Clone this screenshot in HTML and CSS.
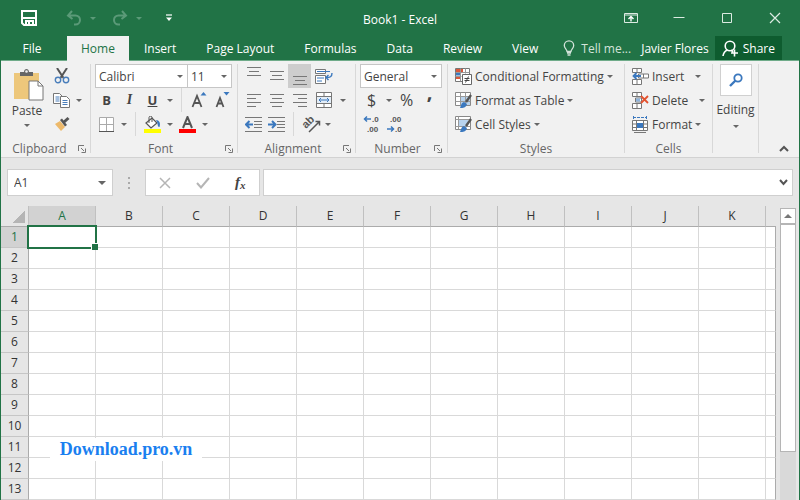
FILE: index.html
```html
<!DOCTYPE html>
<html lang="en">
<head>
  <meta charset="UTF-8">
  <meta name="viewport" content="width=device-width, initial-scale=1.0">
  <title>Book1 - Excel</title>
  <link rel="stylesheet" href="styles.css">
</head>
<body>
  <div class="app">
    <!-- Title bar -->
    <header class="titlebar">
      <div class="quick">
        <button class="save" aria-label="Save">
          <svg width="16" height="16" viewBox="0 0 16 16"><path d="M1 1h14v14H3l-2-2z" fill="none" stroke="#fff" stroke-width="2"/><path d="M2 8h12M5 15v-4h7v4" fill="none" stroke="#fff" stroke-width="2"/><path d="M7 12h2v3H7z" fill="#fff"/></svg>
        </button>
        <button class="faded" aria-label="Undo">
          <svg width="16" height="16" viewBox="0 0 16 16"><path d="M6 1L2 5.500 6.500 9M2 5.500h7.500a4.500 4.500 0 0 1 0 9H8" fill="none" stroke="currentColor" stroke-width="2"/></svg>
        </button>
        <button class="faded arrow" aria-label="Undo list"><span class="caret"></span></button>
        <button class="faded redo" aria-label="Redo">
          <svg width="16" height="16" viewBox="0 0 16 16"><path d="M10 1l4 4.500L9.500 9M14 5.500H6.500a4.500 4.500 0 0 0 0 9H8" fill="none" stroke="currentColor" stroke-width="2"/></svg>
        </button>
        <button class="faded arrow" aria-label="Redo list"><span class="caret"></span></button>
        <button class="customize" aria-label="Customize Quick Access Toolbar">
          <svg width="8" height="8" viewBox="0 0 8 8"><path d="M1 1h6" stroke="#fff" stroke-width="1.200"/><path d="M1 3.500h6L4 7z" fill="#fff"/></svg>
        </button>
      </div>
      <h1>Book1 - Excel</h1>
      <div class="window-buttons">
        <button aria-label="Ribbon display options">
          <svg width="16" height="12" viewBox="0 0 16 12"><path d="M1.500 1.500h13v9h-13zM1 3h14" fill="none" stroke="#dcebe2"/><path d="M8 9.500V5M5.500 7L8 4.500 10.500 7" fill="none" stroke="#fff" stroke-width="1.400"/></svg>
        </button>
        <button aria-label="Minimize">
          <svg width="12" height="12" viewBox="0 0 12 12"><path d="M0.500 5.500h11" stroke="#dcebe2"/></svg>
        </button>
        <button aria-label="Maximize">
          <svg width="12" height="12" viewBox="0 0 12 12"><path d="M1.500 1.500h9v9h-9z" fill="none" stroke="#dcebe2"/></svg>
        </button>
        <button aria-label="Close">
          <svg width="12" height="12" viewBox="0 0 12 12"><path d="M1 1l10 10M11 1L1 11" stroke="#dcebe2" stroke-width="1.200"/></svg>
        </button>
      </div>
    </header>

    <!-- Ribbon tabs -->
    <nav class="tabs">
      <button class="file">File</button>
      <button class="active">Home</button>
      <button>Insert</button>
      <button>Page Layout</button>
      <button>Formulas</button>
      <button>Data</button>
      <button>Review</button>
      <button>View</button>
      <button class="tell">
        <svg width="12" height="16" viewBox="0 0 12 16"><path d="M4 11.500C4 9 1.300 8.500 1.300 5.500a4.700 4.700 0 0 1 9.400 0C10.700 8.500 8 9 8 11.500zM4 13h4M4.500 15h3" fill="none" stroke="currentColor" stroke-width="1.300"/></svg>
        Tell me...
      </button>
      <button class="user">Javier Flores</button>
      <button class="share">
        <svg width="17" height="17" viewBox="0 0 17 17"><circle cx="8" cy="6" r="4.800" fill="none" stroke="#fff" stroke-width="1.600"/><path d="M1 16c.5-3.500 2-5 4.500-6M9 10l2 2M12.500 9.500v7M9 13h7" fill="none" stroke="#fff" stroke-width="1.600"/></svg>
        Share
      </button>
    </nav>

    <!-- Ribbon -->
    <div class="ribbon">
      <section class="group clipboard">
        <div class="tools split">
          <button class="big" aria-label="Paste">
            <svg width="32" height="34" viewBox="0 0 32 34"><path d="M1 5h25v26H1z" fill="#edc77b"/><path d="M7 4h4c0-4 5-4 5 0h4v4H7z" fill="#666"/><circle cx="13.500" cy="3.500" r="1.300" fill="#f1f1f1"/><path d="M16 13h9l5 5v14H16z" fill="#fff" stroke="#777"/><path d="M25 13v5h5" fill="none" stroke="#777"/></svg>
            <span>Paste</span>
            <span class="caret"></span>
          </button>
          <div class="side">
            <div class="row">
              <button class="tool" aria-label="Cut">
                <svg width="16" height="16" viewBox="0 0 16 16"><path d="M3 0l6.500 10M13 0L6.500 10" stroke="#555" stroke-width="2"/><circle cx="4" cy="12" r="2.700" fill="none" stroke="#4a7ebb" stroke-width="1.400"/><circle cx="12" cy="12" r="2.700" fill="none" stroke="#4a7ebb" stroke-width="1.400"/></svg>
              </button>
            </div>
            <div class="row">
              <button class="tool" aria-label="Copy">
                <svg width="17" height="16" viewBox="0 0 17 16"><path d="M.5 1.500h6l3 3v7h-9z" fill="#fff" stroke="#777"/><path d="M2.500 5h4M2.500 7h4M2.500 9h4" stroke="#4a7ebb"/><path d="M7.500 4.500h6l3 3v8h-9z" fill="#fff" stroke="#777"/><path d="M9.500 8.500h5M9.500 10.500h5M9.500 12.500h5" stroke="#4a7ebb"/></svg>
              </button>
              <button class="drop" aria-label="Copy options"><span class="caret"></span></button>
            </div>
            <div class="row">
              <button class="tool" aria-label="Format Painter">
                <svg width="16" height="16" viewBox="0 0 16 16"><path d="M1 8l5-3 5 6-4 4z" fill="#edb96a"/><path d="M6 4l2-1.500 5 6.500-2 1.500z" fill="#555"/><path d="M10 6l4.500-4" stroke="#555" stroke-width="3"/></svg>
              </button>
            </div>
          </div>
        </div>
        <footer><h2>Clipboard</h2><button class="launcher" aria-label="Clipboard settings"><svg width="8" height="8" viewBox="0 0 8 8"><path d="M.5 6V.5H6M3 3l3 3M7.500 3.500v4h-4" fill="none" stroke="#777"/></svg></button></footer>
      </section>

      <section class="group font">
        <div class="tools">
          <div class="row">
            <select class="font-name" aria-label="Font"><option>Calibri</option></select>
            <select class="font-size" aria-label="Font size"><option>11</option></select>
          </div>
          <div class="row">
            <button class="tool bold">B</button>
            <button class="tool italic">I</button>
            <button class="tool underline">U</button>
            <button class="drop" aria-label="Underline options"><span class="caret"></span></button>
            <span class="line"></span>
            <button class="tool" aria-label="Increase font size">
              <svg width="16" height="18" viewBox="0 0 16 18"><path d="M1.500 16L6 5l4.500 11M3 12h6" fill="none" stroke="#555" stroke-width="1.800"/><path d="M9.500 4.500l3-3.500 3 3.500z" fill="#3b78be"/></svg>
            </button>
            <button class="tool" aria-label="Decrease font size">
              <svg width="16" height="18" viewBox="0 0 16 18"><path d="M2.500 16L6 7l3.500 9M3.500 12.500h5" fill="none" stroke="#555" stroke-width="1.800"/><path d="M9.500 1l3 3.500 3-3.500z" fill="#3b78be"/></svg>
            </button>
          </div>
          <div class="row">
            <button class="tool" aria-label="Borders">
              <svg width="15" height="15" viewBox="0 0 15 15"><path d="M.5.5h14v14H.5zM7.500 1v13M1 7.500h13" fill="#fff" stroke="#aaa"/><path d="M0 14.500h15" stroke="#555"/></svg>
            </button>
            <button class="drop" aria-label="Border options"><span class="caret"></span></button>
            <span class="line"></span>
            <button class="tool" aria-label="Fill color">
              <svg width="17" height="17" viewBox="0 0 17 17"><path d="M2 7l6-5 5 5-6 5z" fill="#fff" stroke="#555" stroke-width="1.200"/><path d="M5 7V1.500C5-.3 8-.3 8 1.500V6" fill="none" stroke="#555"/><path d="M12 4c3 0 5 3 3.500 7-1 .5-2-1-2-4z" fill="#3b78be"/><path d="M0 13h17v4H0z" fill="#ff0"/></svg>
            </button>
            <button class="drop" aria-label="Fill color options"><span class="caret"></span></button>
            <button class="tool" aria-label="Font color">
              <svg width="17" height="17" viewBox="0 0 17 17"><path d="M4 12l4.500-11L13 12M5.500 8h6" fill="none" stroke="#555" stroke-width="2"/><path d="M0 13h17v4H0z" fill="#f00"/></svg>
            </button>
            <button class="drop" aria-label="Font color options"><span class="caret"></span></button>
          </div>
        </div>
        <footer><h2>Font</h2><button class="launcher" aria-label="Font settings"><svg width="8" height="8" viewBox="0 0 8 8"><path d="M.5 6V.5H6M3 3l3 3M7.500 3.500v4h-4" fill="none" stroke="#777"/></svg></button></footer>
      </section>

      <section class="group alignment">
        <div class="tools">
          <div class="row">
            <button class="tool" aria-label="Top align"><svg width="16" height="20" viewBox="0 0 16 20"><path d="M1 1.500h14M3 5.500h10M1 9.500h14" stroke="#777"/></svg></button>
            <button class="tool" aria-label="Middle align"><svg width="16" height="20" viewBox="0 0 16 20"><path d="M1 5.500h14M3 9.500h10M1 13.500h14" stroke="#777"/></svg></button>
            <button class="tool pressed" aria-label="Bottom align"><svg width="16" height="20" viewBox="0 0 16 20"><path d="M1 10.500h14M3 14.500h10M1 18.500h14" stroke="#777"/></svg></button>
            <button class="tool wide" aria-label="Wrap text">
              <svg width="18" height="17" viewBox="0 0 18 17"><path d="M.5 1.500h10v4H.5zM.5 7.500h10v8H.5z" fill="#fff" stroke="#777"/><path d="M2 3.500h13M2 10h7M2 13h5" stroke="#3b78be"/><path d="M17 5c0 4-2 4.500-6 4.500M13.500 7L11 9.500l2.500 2.500" fill="none" stroke="#3b78be" stroke-width="1.400"/></svg>
            </button>
          </div>
          <div class="row">
            <button class="tool" aria-label="Align left"><svg width="16" height="14" viewBox="0 0 16 14"><path d="M1 1.500h14M1 5.500h9M1 9.500h14M1 13.500h9" stroke="#777"/></svg></button>
            <button class="tool" aria-label="Center"><svg width="16" height="14" viewBox="0 0 16 14"><path d="M1 1.500h14M3 5.500h10M1 9.500h14M3 13.500h10" stroke="#777"/></svg></button>
            <button class="tool" aria-label="Align right"><svg width="16" height="14" viewBox="0 0 16 14"><path d="M1 1.500h14M6 5.500h9M1 9.500h14M6 13.500h9" stroke="#777"/></svg></button>
            <button class="tool wide" aria-label="Merge and center">
              <svg width="16" height="16" viewBox="0 0 16 16"><path d="M.5.5h15v15H.5zM.5 4.500h15M.5 11.500h15M8 0v4M8 12v4" fill="#fff" stroke="#777"/><path d="M1 5h14v6H1z" fill="#e4eef8"/><path d="M3 8h10M5 6L3 8l2 2M11 6l2 2-2 2" fill="none" stroke="#3b78be"/></svg>
            </button>
            <button class="drop" aria-label="Merge options"><span class="caret"></span></button>
          </div>
          <div class="row">
            <button class="tool" aria-label="Decrease indent"><svg width="17" height="15" viewBox="0 0 17 15"><path d="M0 .5h17M9 4.500h8M9 7.500h8M9 10.500h8M0 14.500h17" stroke="#777"/><path d="M1 7.500h7M4.500 4L1 7.500 4.500 11" fill="none" stroke="#3b78be" stroke-width="2"/></svg></button>
            <button class="tool" aria-label="Increase indent"><svg width="17" height="15" viewBox="0 0 17 15"><path d="M0 .5h17M9 4.500h8M9 7.500h8M9 10.500h8M0 14.500h17" stroke="#777"/><path d="M0 7.500h7M4 4l3.500 3.500L4 11" fill="none" stroke="#3b78be" stroke-width="2"/></svg></button>
            <span class="line"></span>
            <button class="tool" aria-label="Orientation">
              <svg width="20" height="20" viewBox="0 0 20 20"><text class="ab" x="5" y="15" transform="rotate(-45 5 15)">ab</text><path d="M8 18L18 8M14.500 7.500h4v4" fill="none" stroke="#555" stroke-width="1.500"/></svg>
            </button>
            <button class="drop" aria-label="Orientation options"><span class="caret"></span></button>
          </div>
        </div>
        <footer><h2>Alignment</h2><button class="launcher" aria-label="Alignment settings"><svg width="8" height="8" viewBox="0 0 8 8"><path d="M.5 6V.5H6M3 3l3 3M7.500 3.500v4h-4" fill="none" stroke="#777"/></svg></button></footer>
      </section>

      <section class="group number">
        <div class="tools">
          <div class="row">
            <select class="format" aria-label="Number format"><option>General</option></select>
          </div>
          <div class="row">
            <button class="tool sign">$</button>
            <button class="drop" aria-label="Currency options"><span class="caret"></span></button>
            <button class="tool sign">%</button>
            <button class="tool comma">,</button>
          </div>
          <div class="row">
            <button class="tool" aria-label="Increase decimal">
              <svg width="18" height="22" viewBox="0 0 18 22"><text class="digits" x="9" y="9">.0</text><text class="digits" x="4" y="19">.00</text><path d="M1 6h7M4 3.500L1.500 6 4 8.500" fill="none" stroke="#3b78be" stroke-width="1.500"/></svg>
            </button>
            <button class="tool" aria-label="Decrease decimal">
              <svg width="18" height="22" viewBox="0 0 18 22"><text class="digits" x="4" y="9">.00</text><text class="digits" x="9" y="19">.0</text><path d="M1 16h7M5 13.500L7.500 16 5 18.500" fill="none" stroke="#3b78be" stroke-width="1.500"/></svg>
            </button>
          </div>
        </div>
        <footer><h2>Number</h2><button class="launcher" aria-label="Number settings"><svg width="8" height="8" viewBox="0 0 8 8"><path d="M.5 6V.5H6M3 3l3 3M7.500 3.500v4h-4" fill="none" stroke="#777"/></svg></button></footer>
      </section>

      <section class="group styles">
        <div class="tools">
          <button class="row label-tool">
            <svg width="17" height="17" viewBox="0 0 17 17"><path d="M.5.5h14v13H.5z" fill="#fff" stroke="#777"/><path d="M1 1h7v3H1zM1 8h4v3H1z" fill="#d9573b"/><path d="M1 4.500h5v3H1z" fill="#3b78be"/><path d="M.5 4.500h14M.5 8.500h6M5.500.5v13M10.500.5v5" stroke="#999" fill="none"/><path d="M7.500 6.500h9v10h-9z" fill="#fff" stroke="#666"/><path d="M9.500 10.500h5M9.500 12.500h5M13.500 8.500l-3 6" stroke="#444"/></svg>
            <span>Conditional Formatting</span><span class="caret"></span>
          </button>
          <button class="row label-tool">
            <svg width="17" height="17" viewBox="0 0 17 17"><path d="M.5.5h15v13H.5z" fill="#fff" stroke="#888"/><path d="M5 5h10v8H5z" fill="#b8d3ee"/><path d="M.5 4.500h15M.5 9.500h15M5.500.5v13M10.500.5v13" stroke="#999" fill="none"/><path d="M16 3l-5 7" stroke="#555" stroke-width="2.400"/><path d="M5 16c1-2 1-5 4-6l3 2c-1 4-4 4-7 4z" fill="#3b78be"/></svg>
            <span>Format as Table</span><span class="caret"></span>
          </button>
          <button class="row label-tool">
            <svg width="17" height="17" viewBox="0 0 17 17"><path d="M.5.5h15v13H.5z" fill="#fff" stroke="#888"/><path d="M4 4h9v7H4z" fill="#b8d3ee"/><path d="M.5 3.500h15M.5 10.500h15M3.500.5v13" stroke="#999" fill="none"/><path d="M16 3l-5 7" stroke="#555" stroke-width="2.400"/><path d="M5 16c1-2 1-5 4-6l3 2c-1 4-4 4-7 4z" fill="#3b78be"/></svg>
            <span>Cell Styles</span><span class="caret"></span>
          </button>
        </div>
        <footer><h2>Styles</h2></footer>
      </section>

      <section class="group cells">
        <div class="tools">
          <button class="row label-tool">
            <svg width="17" height="17" viewBox="0 0 17 17"><path d="M.5.5h9v4h-9zM5 .5v4M.5 11.500h9v5h-9zM5 11.500v5M6.500 6h10v4h-10zM11.500 6v4" fill="#fff" stroke="#777"/><path d="M1 8h8M4.500 5L1.500 8l3 3" fill="none" stroke="#3b78be" stroke-width="1.800"/></svg>
            <span>Insert</span><span class="caret far"></span>
          </button>
          <button class="row label-tool">
            <svg width="17" height="17" viewBox="0 0 17 17"><path d="M.5.5h9v4h-9zM5 .5v4M.5 11.500h9v5h-9zM5 11.500v5M3.500 6h6v4h-6z" fill="#fff" stroke="#777"/><path d="M4 6.500h4v3H4z" fill="#8fb4dc"/><path d="M9 4l7 7M16 4l-7 7" stroke="#e2522f" stroke-width="1.800"/></svg>
            <span>Delete</span><span class="caret far"></span>
          </button>
          <button class="row label-tool">
            <svg width="17" height="17" viewBox="0 0 17 17"><path d="M1 1.500h14M1.500 0v3M14.500 0v3" stroke="#3b78be" stroke-dasharray="3 1"/><path d="M.5 4.500h15v10H.5zM.5 8h15M.5 11.500h15M4.500 4.500v10M11.500 4.500v10" fill="#fff" stroke="#777"/><path d="M5 7h6v5H5z" fill="#3b78be"/><path d="M2 16.500h12" stroke="#777"/></svg>
            <span>Format</span><span class="caret"></span>
          </button>
        </div>
        <footer><h2>Cells</h2></footer>
      </section>

      <section class="group editing">
        <button class="edit">
          <span class="edit-icon"><svg width="14" height="14" viewBox="0 0 14 14"><circle cx="9" cy="5" r="3.700" fill="none" stroke="#3b78be" stroke-width="1.800"/><path d="M6.500 7.500L1 13" stroke="#3b78be" stroke-width="2.400"/></svg></span>
          <span>Editing</span>
          <span class="caret"></span>
        </button>
      </section>

      <button class="collapse" aria-label="Collapse the ribbon">
        <svg width="10" height="7" viewBox="0 0 10 7"><path d="M1 6l4-4 4 4" fill="none" stroke="#555" stroke-width="2"/></svg>
      </button>
    </div>

    <!-- Formula bar -->
    <div class="formula-bar">
      <div class="name-box">
        <input type="text" value="A1" aria-label="Name box">
        <button aria-label="Named ranges"><span class="caret large"></span></button>
      </div>
      <span class="dots"></span>
      <div class="formula-buttons">
        <button aria-label="Cancel"><svg width="12" height="12" viewBox="0 0 12 12"><path d="M1 1l10 10M11 1L1 11" stroke="#b5b5b5" stroke-width="1.500"/></svg></button>
        <button aria-label="Enter"><svg width="14" height="12" viewBox="0 0 14 12"><path d="M1 6l4 4.500L13 1" fill="none" stroke="#b5b5b5" stroke-width="2"/></svg></button>
        <button class="fx" aria-label="Insert function">f<small>x</small></button>
      </div>
      <div class="formula">
        <input type="text" aria-label="Formula">
        <button aria-label="Expand formula bar"><svg width="9" height="7" viewBox="0 0 9 7"><path d="M1 1l3.500 4L8 1" fill="none" stroke="#555" stroke-width="2"/></svg></button>
      </div>
    </div>

    <!-- Sheet -->
    <main class="sheet">
      <div class="grid">
        <table>
          <thead>
            <tr id="columns"><th class="corner"></th></tr>
          </thead>
          <tbody id="rows"></tbody>
        </table>
      </div>
      <div class="scrollbar">
        <button aria-label="Scroll up"><span class="up"></span></button>
        <div class="thumb"></div>
      </div>
      <a class="watermark" href="#">Download.pro.vn</a>
    </main>
  </div>
  <script>
    const letters = "ABCDEFGHIJK";
    const rowCount = 13;

    const columns = document.getElementById("columns");
    for (const letter of letters) {
      const th = document.createElement("th");
      th.textContent = letter;
      if (letter === "A") th.className = "current";
      columns.appendChild(th);
    }
    // the last column runs under the edge of the window
    const rest = document.createElement("th");
    rest.className = "rest";
    columns.appendChild(rest);

    const rows = document.getElementById("rows");
    for (let i = 1; i <= rowCount; i++) {
      const tr = document.createElement("tr");
      const th = document.createElement("th");
      th.textContent = i;
      if (i === 1) th.className = "current";
      tr.appendChild(th);
      for (let j = 0; j <= letters.length; j++) {
        const td = document.createElement("td");
        if (i === 1 && j === 0) td.className = "selected";
        tr.appendChild(td);
      }
      rows.appendChild(tr);
    }
  </script>
</body>
</html>
```
FILE: styles.css
```css
* {
  box-sizing: border-box;
}
body {
  margin: 0;
  font-family: "Open Sans", "Noto Sans", sans-serif;
  font-size: 12px;
  color: #444;
}
button, input, select {
  font: inherit;
  color: inherit;
  margin: 0;
  padding: 0;
  border: none;
  background: none;
  border-radius: 0;
}
button {
  display: flex;
  align-items: center;
  justify-content: center;
  white-space: nowrap;
}
svg {
  display: block;
  flex: none;
}
h1, h2 {
  margin: 0;
  font-size: 12px;
  font-weight: normal;
}
.app {
  display: flex;
  flex-direction: column;
  height: 100vh;
  overflow: hidden;
  border-left: 1px solid #217346;
  border-right: 1px solid #217346;
  background: #e6e6e6;
}
.caret {
  flex: none;
  border: 3px solid transparent;
  border-top-color: #666;
  border-bottom: none;
}
.caret.large {
  border-width: 4px 4px 0;
}

/* Title bar */
.titlebar {
  display: grid;
  grid-template-columns: 1fr auto 1fr;
  align-items: center;
  height: 36px;
  flex: none;
  background: #217346;
  color: #fff;
}
.titlebar h1 {
  padding-top: 3px;
}
.quick {
  display: flex;
  align-items: center;
  padding-left: 20px;
}
.save {
  margin-right: 29px;
}
.faded {
  color: #5b9a78;
}
.faded .caret {
  border-top-color: #5b9a78;
}
.arrow {
  width: 22px;
}
.redo {
  margin-left: 8px;
}
.customize {
  margin-left: 15px;
}
.window-buttons {
  display: flex;
  justify-content: flex-end;
}
.window-buttons button {
  width: 48px;
  height: 34px;
}

/* Tabs */
.tabs {
  display: flex;
  height: 25px;
  flex: none;
  background: #217346;
  border-bottom: 1px solid #6fab89;
  color: #fff;
}
.tabs button {
  flex: none;
  padding: 0 15px;
}
.tabs .file {
  width: 66px;
  padding: 0 4px 0 0;
}
.tabs .active {
  height: 25px;
  padding: 0 14px;
  background: #f1f1f1;
  color: #217346;
}
.tabs .tell {
  gap: 6px;
  padding: 0 4px 0 10px;
  color: #d3e3da;
}
.tabs .user {
  padding: 0 6px;
}
.tabs .share {
  gap: 4px;
  margin: 0 17px 0 auto;
  padding: 0 7px;
  background: #0e5c2f;
}

/* Ribbon */
.ribbon {
  display: flex;
  height: 97px;
  flex: none;
  padding-top: 3px;
  background: #f1f1f1;
  border-bottom: 1px solid #d2d2d2;
}
.group {
  display: flex;
  flex-direction: column;
  flex: none;
  margin-bottom: 4px;
  border-right: 1px solid #d8d8d8;
}
.tools {
  height: 72px;
  padding-left: 4px;
}
.row {
  display: flex;
  align-items: center;
  height: 24px;
}
.group footer {
  display: flex;
  align-items: center;
  justify-content: center;
  height: 17px;
  margin-top: 4px;
  padding: 0 5px;
  color: #666;
}
.group footer h2 {
  flex: 1;
  text-align: center;
}
.launcher {
  width: 8px;
}
.clipboard { width: 90px; }
.font { width: 147px; }
.alignment { width: 118px; }
.number { width: 92px; }
.styles { width: 177px; }
.cells { width: 88px; }
.editing { width: 46px; }
.clipboard footer, .font footer, .alignment footer {
  padding-right: 4px;
}
.clipboard footer {
  padding-left: 0;
}
.group.clipboard .tools {
  display: flex;
  padding-left: 3px;
}
.big {
  flex-direction: column;
  justify-content: flex-start;
  width: 46px;
  padding-top: 4px;
}
.big svg {
  margin-left: 4px;
}
.big .caret {
  margin-top: 5px;
}
.tool {
  width: 23px;
  height: 24px;
}
.tool.wide {
  width: 26px;
}
.pressed {
  background: #cdcdcd;
}
.drop {
  width: 12px;
  height: 24px;
}
.line {
  width: 1px;
  height: 24px;
  margin: 0 5px;
  background: #d8d8d8;
}
.bold, .underline {
  font-weight: bold;
  font-size: 13px;
}
.underline {
  text-decoration: underline;
}
.italic {
  font-family: "Liberation Serif", serif;
  font-style: italic;
  font-weight: bold;
  font-size: 14px;
}
.sign {
  font-size: 16px;
}
.comma {
  font-size: 20px;
  font-weight: bold;
  line-height: 10px;
  padding-bottom: 16px;
}
.ab {
  font-family: "Liberation Sans", sans-serif;
  font-size: 11px;
  font-weight: bold;
  fill: #555;
}
.digits {
  font-family: "Liberation Sans", sans-serif;
  font-size: 8px;
  font-weight: bold;
  fill: #555;
}
select {
  appearance: none;
  height: 24px;
  padding-left: 3px;
  border: 1px solid #c6c6c6;
  background: #fff url("data:image/svg+xml,%3Csvg xmlns='http://www.w3.org/2000/svg' width='6' height='3'%3E%3Cpath d='M0 0h6L3 3z' fill='%23666'/%3E%3C/svg%3E") no-repeat right 4px center;
}
.font-name {
  width: 93px;
}
.font-size {
  width: 45px;
  margin-left: -1px;
}
.format {
  width: 82px;
}
.styles .tools, .cells .tools {
  padding-left: 7px;
}
.label-tool {
  gap: 3px;
}
.far {
  margin-left: 8px;
}
.edit {
  flex-direction: column;
}
.edit-icon {
  display: flex;
  align-items: center;
  justify-content: center;
  width: 32px;
  height: 32px;
  margin-bottom: 5px;
  border: 1px solid #d0d0d0;
  background: #fff;
}
.edit .caret {
  margin-top: 7px;
}
.collapse {
  align-self: flex-end;
  margin: 0 10px 5px auto;
}

/* Formula bar */
.formula-bar {
  display: flex;
  height: 48px;
  flex: none;
  padding: 11px 6px 10px;
}
.name-box, .formula-buttons, .formula {
  display: flex;
  align-items: center;
  border: 1px solid #cfcfcf;
  background: #fff;
}
.name-box {
  width: 106px;
}
.name-box input {
  flex: 1;
  min-width: 0;
  padding-left: 6px;
}
.name-box button {
  width: 20px;
  height: 24px;
}
.dots {
  width: 2px;
  height: 12px;
  margin: 8px 15px 0;
  background: repeating-linear-gradient(#aaa 0 2px, transparent 2px 5px);
}
.formula-buttons {
  width: 115px;
  margin-right: 3px;
}
.formula-buttons button {
  width: 38px;
  height: 24px;
}
.formula-buttons .fx {
  font-family: "Liberation Serif", serif;
  font-style: italic;
  font-weight: bold;
  font-size: 15px;
}
.fx small {
  font-size: 11px;
  padding-top: 4px;
}
.formula {
  flex: 1;
}
.formula input {
  flex: 1;
  min-width: 0;
  padding-left: 6px;
}
.formula button {
  width: 18px;
  height: 24px;
}

/* Sheet */
.sheet {
  position: relative;
  display: flex;
  flex: 1;
  min-height: 0;
}
.grid {
  flex: 1;
  min-width: 0;
  overflow: hidden;
}
table {
  width: 100%;
  table-layout: fixed;
  border-collapse: separate;
  border-spacing: 0;
}
th, td {
  height: 21px;
  padding: 0;
}
th {
  font-weight: 500;
  line-height: 18px;
  color: #333;
}
thead th {
  width: 67px;
  border-right: 1px solid #c0c0c0;
  border-bottom: 1px solid #ababab;
}
thead .corner {
  width: 28px;
  background: linear-gradient(135deg, transparent 50%, #b5b5b5 50%) no-repeat 12px 5px / 12px 12px;
}
thead .rest {
  width: auto;
  border-right: none;
}
tbody th {
  border-right: 1px solid #ababab;
  border-bottom: 1px solid #c6c6c6;
}
td {
  background: #fff;
  border-right: 1px solid #d9d9d9;
  border-bottom: 1px solid #d9d9d9;
}
td:last-child {
  border-right-color: #ababab;
}
th.current {
  background-color: #d2d2d2;
  color: #217346;
}
.selected {
  position: relative;
}
.selected::before {
  content: "";
  position: absolute;
  inset: -2px;
  border: 2px solid #217346;
}
.selected::after {
  content: "";
  position: absolute;
  right: -3px;
  bottom: -3px;
  width: 6px;
  height: 6px;
  background: #217346;
  border: 1px solid #fff;
  border-width: 1px 0 0 1px;
}
.scrollbar {
  display: flex;
  flex-direction: column;
  width: 16px;
  margin: 2px 3px 0 4px;
  background: #d9d9d9;
}
.scrollbar button {
  height: 16px;
  border: 1px solid #b5b5b5;
  background: #fff;
}
.up {
  border: 4px solid transparent;
  border-top: none;
  border-bottom-color: #777;
}
.thumb {
  height: 78%;
  border: 1px solid #b5b5b5;
  background: #fff;
}
.watermark {
  position: absolute;
  left: 49px;
  bottom: 39px;
  width: 152px;
  font-family: "Liberation Serif", serif;
  font-size: 18px;
  font-weight: bold;
  line-height: 23px;
  text-align: center;
  text-decoration: none;
  color: #1a7ff0;
  background: #fff;
}
```
